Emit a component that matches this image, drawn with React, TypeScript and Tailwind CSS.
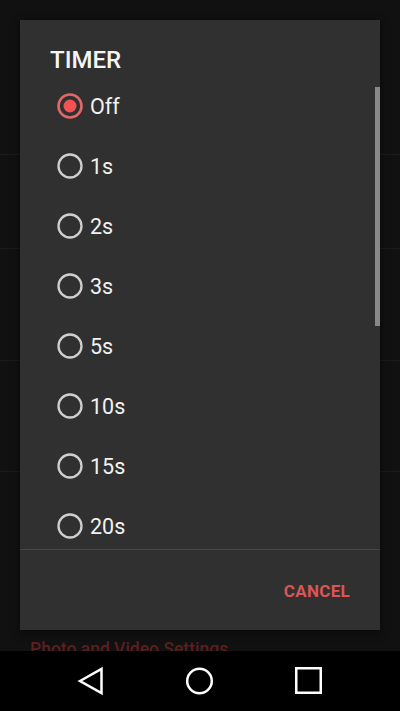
import React from "react";

const options = ["Off", "1s", "2s", "3s", "5s", "10s", "15s", "20s", "30s"];

function Radio({ checked }: { checked: boolean }) {
  return (
    <svg width="28" height="28" viewBox="0 0 28 28" className="shrink-0">
      {checked ? (
        <>
          <circle cx="14" cy="14" r="11.5" fill="none" stroke="#e06868" strokeWidth="2.6" />
          <circle cx="14" cy="14" r="6.5" fill="#f25252" />
        </>
      ) : (
        <circle cx="14" cy="14" r="11.5" fill="none" stroke="#cfcfcf" strokeWidth="2.3" />
      )}
    </svg>
  );
}

export default function App() {
  return (
    <div
      className="w-[400px] h-[711px] flex flex-col bg-[#111111] overflow-hidden"
      style={{ fontFamily: "Roboto, 'Noto Sans', sans-serif" }}
    >
      <div className="relative flex-1 overflow-hidden">
        {/* background settings list */}
        <div className="flex flex-col">
          <div className="h-[155px] border-b border-[#1b1b1b]" />
          <div className="h-[94px] border-b border-[#1b1b1b]" />
          <div className="h-[112px] border-b border-[#1b1b1b]" />
          <div className="h-[111px] border-b border-[#1b1b1b]" />
          <div className="h-[165px]" />
          <div className="pl-[30px] text-[17.5px] font-medium text-[#5c1f1f] leading-[24px] whitespace-nowrap">
            Photo and Video Settings
          </div>
        </div>

        {/* dialog */}
        <div className="absolute left-[20px] top-[20px] w-[360px] h-[610px] bg-[#303030] flex flex-col shadow-[0_2px_8px_rgba(0,0,0,0.5)]">
          <div className="pt-[28px] pl-[30px] h-[56px] text-[24px] leading-[24px] font-medium text-[#f5f5f5]">
            TIMER
          </div>
          <div className="relative h-[473px] overflow-hidden">
            <div className="flex flex-col">
              {options.map((o, i) => (
                <div key={o} className="h-[60px] flex items-center pl-[36px] gap-[6px] shrink-0">
                  <Radio checked={i === 0} />
                  <span className="text-[21.5px] text-[#f2f2f2] leading-none pt-[1px]">{o}</span>
                </div>
              ))}
            </div>
            <div className="absolute right-0 top-[11px] w-[5px] h-[239px] bg-[#888888]" />
          </div>
          <div className="h-px bg-[#474747]" />
          <div className="flex-1 flex items-center justify-end pr-[30px] pt-[3px]">
            <span className="text-[17px] font-bold text-[#dc5555] tracking-[0.3px]">CANCEL</span>
          </div>
        </div>
      </div>

      {/* nav bar */}
      <div className="h-[60px] bg-black flex items-center pl-[76px] gap-[79px] shrink-0">
        <svg width="30" height="30" viewBox="0 0 30 30">
          <path d="M4 15 L25.5 3 L25.5 27 Z" fill="none" stroke="#fff" strokeWidth="2.5" />
        </svg>
        <svg width="30" height="30" viewBox="0 0 30 30">
          <circle cx="14.5" cy="15" r="12.3" fill="none" stroke="#fff" strokeWidth="2.5" />
        </svg>
        <svg width="30" height="30" viewBox="0 0 30 30">
          <rect x="2.25" y="2.25" width="24.5" height="24.5" fill="none" stroke="#fff" strokeWidth="2.5" />
        </svg>
      </div>
    </div>
  );
}
